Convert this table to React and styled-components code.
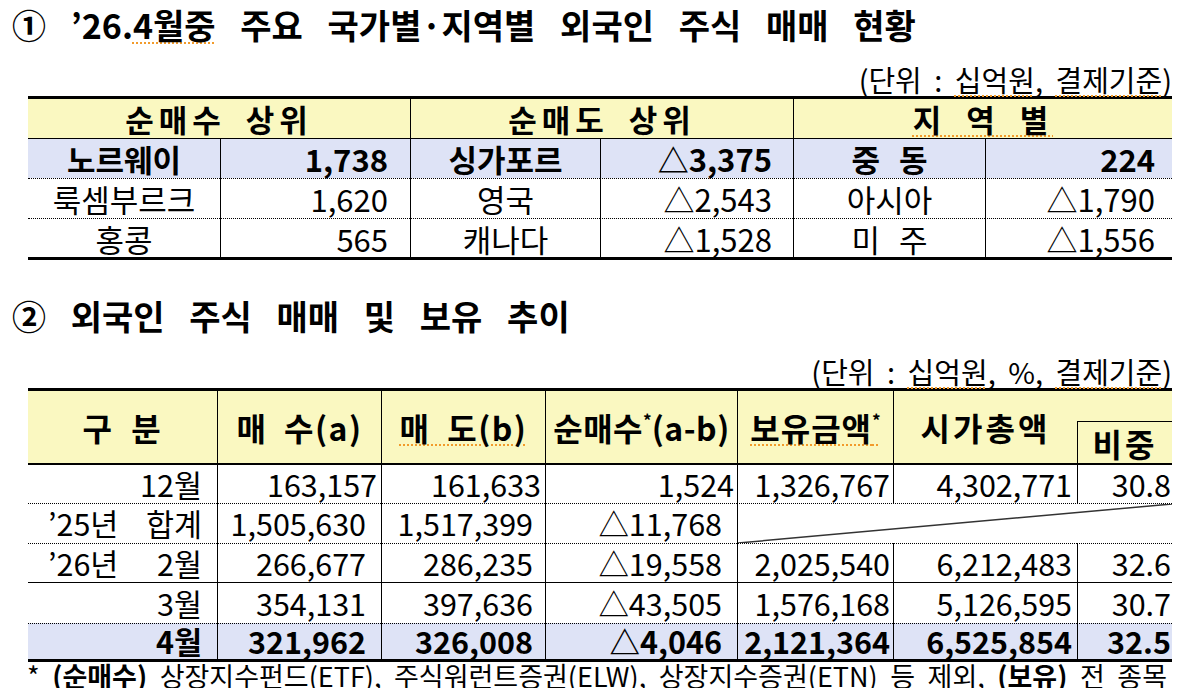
import React from 'react';
import styled, { createGlobalStyle } from 'styled-components';

const GlobalStyle = createGlobalStyle`
  body {
    margin: 0;
    background: #fff;
    color: #000;
    font-family: "Noto Sans CJK KR", "Noto Sans", sans-serif;
  }
`

const YELLOW = '#faf8c1'
const LAVENDER = '#dee3f6'

const Page = styled.div`
  width: 1182px;
  height: 688px;
  overflow: hidden;
`

const Title = styled.h1`
  margin: ${props => props.$mt || 0}px 0 0 0;
  padding-left: 12px;
  height: 52px;
  line-height: 50px;
  font-size: 34px;
  font-weight: 700;
  word-spacing: 17px;
  white-space: nowrap;
`

const Unit = styled.div`
  height: ${props => props.$h}px;
  display: flex;
  align-items: flex-end;
  justify-content: flex-end;
  padding-right: 10px;
  line-height: 34px;
  font-size: 29px;
  word-spacing: 6px;
  white-space: pre;
`

const Squiggle = styled.span`
  text-decoration: underline dotted #f29b2b;
  text-decoration-thickness: 2px;
  text-underline-offset: 3px;
`

const Table = styled.div`
  margin-left: 28px;
  width: 1144px;
  display: grid;
  grid-template-columns: ${props => props.$cols};
  grid-template-rows: ${props => props.$rows};
  border-top: 3px solid #000;
  border-bottom: 3px solid #000;
  font-size: ${props => props.$size}px;
`

const tops = {
  dot: '1px dotted #000',
  solid: '1px solid #000',
}

const Cell = styled.div`
  box-sizing: border-box;
  display: flex;
  align-items: center;
  justify-content: ${props => props.$align === 'right' ? 'flex-end' : props.$align === 'between' ? 'space-between' : 'center'};
  padding: 0 ${props => props.$pr || 0}px 0 ${props => props.$pl || 0}px;
  grid-column: ${props => props.$col || 'auto'};
  grid-row: ${props => props.$row || 'auto'};
  background: ${props => props.$bg || 'transparent'};
  font-weight: ${props => props.$bold ? 700 : 400};
  border-left: ${props => props.$left ? '1px solid #000' : 'none'};
  border-top: ${props => tops[props.$top] || 'none'};
  border-bottom: ${props => props.$thickBottom ? '2px solid #000' : 'none'};
  white-space: pre;
  word-spacing: 12px;
  line-height: 1;
`

const HeadText = styled.span`
  font-weight: 700;
  font-size: ${props => props.$size || 31}px;
  letter-spacing: ${props => props.$ls || 0}px;
  word-spacing: 8px;
`

const Star = styled.sup`
  font-size: 17px;
  vertical-align: 14px;
  line-height: 0;
  letter-spacing: 0;
`

const Diagonal = styled.svg`
  display: block;
  width: 100%;
  height: 100%;
`

const Footnote = styled.div`
  margin-left: 27px;
  line-height: 28px;
  font-size: 27px;
  word-spacing: 6.5px;
  white-space: pre;
  b { font-weight: 700; }
`

const table1Rows = [
  ['노르웨이', '1,738', '싱가포르', '△3,375', '중 동', '224'],
  ['룩셈부르크', '1,620', '영국', '△2,543', '아시아', '△1,790'],
  ['홍콩', '565', '캐나다', '△1,528', '미 주', '△1,556'],
]

const table1Pads = [0, 22, 0, 21, 0, 17]

const table2Rows = [
  { label: ['12월'], vals: ['163,157', '161,633', '1,524', '1,326,767', '4,302,771', '30.8'], pads: [4, 4, 3, 3, 5, 1] },
  { label: ['’25년', '합계'], vals: ['1,505,630', '1,517,399', '△11,768'], merged: true, top: 'dot' },
  { label: ['’26년', '2월'], vals: ['266,677', '286,235', '△19,558', '2,025,540', '6,212,483', '32.6'], top: 'dot' },
  { label: ['3월'], vals: ['354,131', '397,636', '△43,505', '1,576,168', '5,126,595', '30.7'], top: 'solid' },
  { label: ['4월'], vals: ['321,962', '326,008', '△4,046', '2,121,364', '6,525,854', '32.5'], top: 'dot', bold: true, bg: LAVENDER },
]

const table2Pads = [15, 12, 15, 3, 5, 1]

const NetTable = () => (
  <Table $cols="192px 190px 190px 193px 192px 187px" $rows="39px 40px 40px 39px" $size={31}>
    <Cell $col="1 / 3" $bg={YELLOW}><HeadText $ls={5}>순매수 상위</HeadText></Cell>
    <Cell $col="3 / 5" $bg={YELLOW} $left><HeadText $ls={5}>순매도 상위</HeadText></Cell>
    <Cell $col="5 / 7" $bg={YELLOW} $left><HeadText $ls={5}><Squiggle>지 역 별</Squiggle></HeadText></Cell>
    {table1Rows.map((row, r) => row.map((txt, c) => (
      <Cell
        key={`${r}-${c}`}
        $align={c % 2 ? 'right' : 'center'}
        $pr={table1Pads[c]}
        $left={c > 0}
        $top={r === 0 ? 'solid' : 'dot'}
        $bold={r === 0}
        $bg={r === 0 ? LAVENDER : undefined}
      >
        {txt}
      </Cell>
    )))}
  </Table>
)

const TrendTable = () => (
  <Table $cols="189px 164px 164px 192px 156px 184px 95px" $rows="30px 44px 38px 40px 39px 41px 36px" $size={30.5}>
    <Cell $col="1" $row="1 / 3" $bg={YELLOW} $thickBottom><HeadText $size={32} $ls={2}>구 분</HeadText></Cell>
    <Cell $col="2" $row="1 / 3" $bg={YELLOW} $thickBottom $left><HeadText $size={32} $ls={1.5}>매 수(a)</HeadText></Cell>
    <Cell $col="3" $row="1 / 3" $bg={YELLOW} $thickBottom $left><HeadText $size={32} $ls={1.5}><Squiggle>매 도(b)</Squiggle></HeadText></Cell>
    <Cell $col="4" $row="1 / 3" $bg={YELLOW} $thickBottom $left><HeadText $size={32} $ls={0.5}>순매수<Star>*</Star>(a-b)</HeadText></Cell>
    <Cell $col="5" $row="1 / 3" $bg={YELLOW} $thickBottom $left><HeadText $size={32} $ls={1}><Squiggle>보유금액<Star>*</Star></Squiggle></HeadText></Cell>
    <Cell $col="6" $row="1 / 3" $bg={YELLOW} $thickBottom $left><HeadText $size={32} $ls={3}>시가총액</HeadText></Cell>
    <Cell $col="7" $row="1" $bg={YELLOW} />
    <Cell $col="7" $row="2" $bg={YELLOW} $thickBottom $left $top="solid"><HeadText $size={32} $ls={3}>비중</HeadText></Cell>

    {table2Rows.map((row, r) => (
      <React.Fragment key={r}>
        <Cell
          $align={row.label.length > 1 ? 'between' : 'right'}
          $pl={20}
          $pr={15}
          $top={row.top}
          $bold={row.bold}
          $bg={row.bg}
        >
          {row.label.map(t => <span key={t}>{t}</span>)}
        </Cell>
        {row.vals.map((v, c) => (
          <Cell
            key={c}
            $align="right"
            $pr={(row.pads || table2Pads)[c]}
            $left
            $top={row.top}
            $bold={row.bold}
            $bg={row.bg}
          >
            {v}
          </Cell>
        ))}
        {row.merged && (
          <Cell $col="span 3" $left $top={row.top}>
            <Diagonal viewBox="0 0 100 100" preserveAspectRatio="none">
              <line x1="0" y1="100" x2="100" y2="0" stroke="#333" strokeWidth="1.5" vectorEffect="non-scaling-stroke" />
            </Diagonal>
          </Cell>
        )}
      </React.Fragment>
    ))}
  </Table>
)

const App = () => (
  <Page>
    <GlobalStyle />
    <Title>① ’26.<Squiggle>4월중</Squiggle> 주요 국가별·지역별 외국인 주식 매매 현황</Title>
    <Unit $h={44}>(단위 : <Squiggle>십억원</Squiggle>, <Squiggle>결제기준</Squiggle>)</Unit>
    <NetTable />
    <Title $mt={31}>② 외국인 주식 매매 및 보유 추이</Title>
    <Unit $h={45}>(단위 : <Squiggle>십억원</Squiggle>, %, <Squiggle>결제기준</Squiggle>)</Unit>
    <TrendTable />
    <Footnote>* <b>(순매수)</b> 상장지수펀드(ETF), 주식워런트증권(ELW), 상장지수증권(ETN) 등 제외, <b>(보유)</b> 전 종목</Footnote>
  </Page>
)

export default App;
